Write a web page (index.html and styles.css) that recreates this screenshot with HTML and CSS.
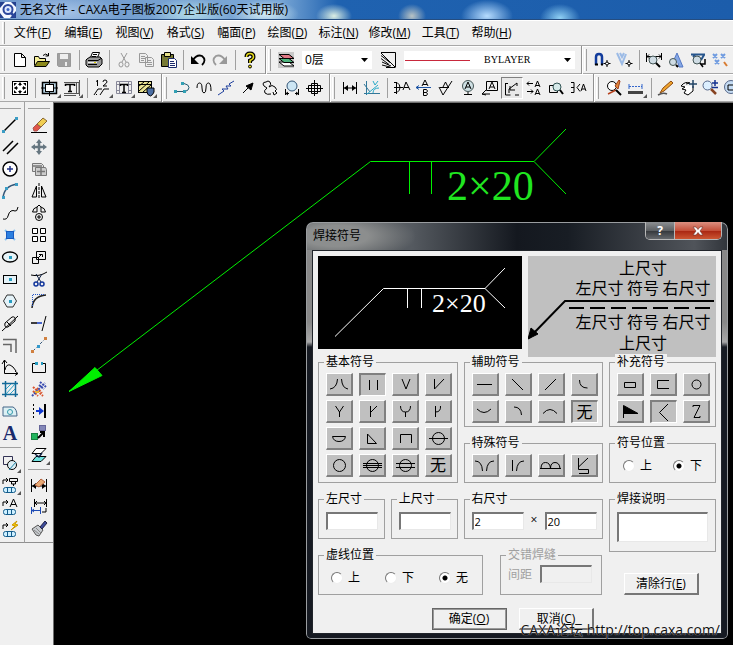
FILE: index.html
```html
<!DOCTYPE html>
<html lang="zh-CN">
<head>
<meta charset="utf-8">
<title>无名文件 - CAXA电子图板2007企业版(60天试用版)</title>
<link rel="stylesheet" href="styles.css">
</head>
<body>
<div class="app">
<header class="titlebar">
<svg class="logo" viewBox="0 0 16 16"><rect width="16" height="16" fill="#f4f8ff"/><path d="M0 0h5L0 6zM10 16l6-7v7zM0 11l4 5H0zM11 0h5v5z" fill="#24418f"/><circle cx="8" cy="7.500" r="4.500" fill="#dfeaff" stroke="#2c479c" stroke-width="2"/><circle cx="8" cy="7.500" r="1.500" fill="#3a62c4"/><path d="M11 11l4 4" stroke="#2c479c" stroke-width="2.500"/></svg>
<h1>无名文件 - CAXA电子图板2007企业版(60天试用版)</h1>
</header>
<nav class="menubar"><span class="grip"></span>
<button>文件(<u>F</u>)</button><button>编辑(<u>E</u>)</button><button>视图(<u>V</u>)</button><button>格式(<u>S</u>)</button><button>幅面(<u>P</u>)</button><button>绘图(<u>D</u>)</button><button>标注(<u>N</u>)</button><button>修改(<u>M</u>)</button><button>工具(<u>T</u>)</button><button>帮助(<u>H</u>)</button>
</nav>

<div class="toolbar"><span class="grip"></span>
<button class="tool"><svg viewBox="0 0 18 18"><path d="M3.500 2.500h7l4 4v9h-11zM10.500 2.500v4h4" fill="#fff"/></svg></button>
<button class="tool"><svg viewBox="0 0 18 18"><path d="M1.500 14.500v-9h4l1 2h6v3" fill="#f6f09a"/><path d="M1.500 15.500l3-5h12l-3.500 5z" fill="#8c8a1c"/><path d="M10 4.500q3-3 5 0M15.500 2v3h-3"/></svg></button>
<button class="tool"><svg viewBox="0 0 18 18" stroke="#999"><path d="M2.500 2.500h13v13h-12l-1-1z" fill="#a0a0a0"/><path d="M5 3h8v5H5zM10 11h2v4h-2z" fill="#eee" stroke="none"/></svg></button>
<span class="sep"></span>
<button class="tool"><svg viewBox="0 0 18 18"><path d="M5.500 6.500l2-5h7l-2 5" fill="#fff"/><path d="M2 8l3-2h10l2 2v5l-3 3H3l-2-2V9z" fill="#999"/><path d="M8 3.500h4M7 5.500h4M3 9.500h10l3-2M3 13.500h9" /><path d="M3 11.500h9" stroke="#eee"/><path d="M9 11.500h2" stroke="#e2d200"/></svg></button>
<span class="sep"></span>
<button class="tool"><svg viewBox="0 0 18 18" stroke="#999"><path d="M6 2l5 9M12 2L7 11"/><ellipse cx="6" cy="13.500" rx="2" ry="2.500"/><ellipse cx="12" cy="13.500" rx="2" ry="2.500"/></svg></button>
<button class="tool"><svg viewBox="0 0 18 18" stroke="#999"><path d="M2.500 2.500h6l2 2v7h-8zM8.500 6.500h6l2 2v7h-8zM4 5.500h4M4 7.500h4M4 9.500h3M10 9.500h4M10 11.500h5M10 13.500h5" fill="#eee"/></svg></button>
<button class="tool"><svg viewBox="0 0 18 18"><path d="M2.500 3.500h12v12h-12z" fill="#777a35"/><path d="M5.500 1.500h6v4h-6z" fill="#e7e18a"/><path d="M9.500 7.500h6l2 2v7h-8z" fill="#fff" stroke="#1b2a6c"/><path d="M11 10.500h4M11 12.500h5M11 14.500h5" stroke="#1b2a6c"/></svg></button>
<span class="sep"></span>
<button class="tool"><svg viewBox="0 0 18 18"><path d="M4 9q4-6 9-4 5 4 0 9" stroke-width="1.800"/><path d="M2 5v8h8z" fill="#000" stroke="none"/></svg></button>
<button class="tool"><svg viewBox="0 0 18 18" stroke="#999"><path d="M14 9q-4-6-9-4-5 4 0 9" stroke-width="1.800"/><path d="M16 5v8H8z" fill="#999" stroke="none"/></svg></button>
<span class="sep"></span>
<button class="tool"><svg viewBox="0 0 18 18"><path d="M5.500 6q0-3.500 3.500-3.500T12.500 6Q12.500 8 9 9.500V12" stroke-width="4"/><path d="M5.500 6q0-3.500 3.500-3.500T12.500 6Q12.500 8 9 9.500V12" stroke="#e8dc18" stroke-width="1.500"/><circle cx="9" cy="15.500" r="1.500" fill="#e8dc18"/></svg></button>
<span class="edge"></span><span class="grip"></span>
<button class="tool"><svg viewBox="0 0 18 18"><rect x="1" y="1" width="16" height="16" fill="#c8c8c8" stroke="none"/><path d="M2 11l5 4h10l-5-4z" fill="#fff"/><path d="M2 7.500l5 4h10l-5-4z" fill="#4fb57e"/><path d="M2 3.500l5 4h10l-5-4z" fill="#df7884"/></svg></button>
<label class="combo layer"><select aria-label="图层"><option>0层</option></select><svg viewBox="0 0 7 4"><path d="M0 0h7L3.500 4z"/></svg></label>
<button class="tool"><svg viewBox="0 0 18 18"><path d="M2 1.500h14.500V16M2 2l14 14M2 4.500l9 7M2 7.500l8 6M3 11l9 4M3 14l8 2M7 16.500h9.500" fill="none"/></svg></button>
<label class="combo line"><select aria-label="线型"><option>BYLAYER</option></select><svg viewBox="0 0 7 4"><path d="M0 0h7L3.500 4z"/></svg></label>
<span class="edge"></span><span class="grip"></span>
<button class="tool"><svg viewBox="0 0 18 18"><path d="M3 14V6q0-3 3-3t3 3v8" stroke="#123c9c" stroke-width="2.500"/><path d="M2 13.500h3M8 13.500h2" stroke-width="2"/><path d="M14 9v7M10.500 12.500h7"/><circle cx="14" cy="12.500" r="1.500" fill="#fff"/></svg></button>
<button class="tool"><svg viewBox="0 0 18 18"><path d="M2 2l5 11 4-10M5 2l2 4 2-4" stroke="#9cbbe6" stroke-width="2"/><path d="M14 9v7M10.500 12.500h7"/><circle cx="14" cy="12.500" r="1.500" fill="#fff"/></svg></button>
<span class="sep"></span>
<button class="tool"><svg viewBox="0 0 18 18"><path d="M1.500 2v9M16.500 2v7M2 5.500h14M4 3.500l-2 2 2 2M14 3.500l2 2-2 2"/><circle cx="8" cy="9" r="4" fill="#cfdce4" stroke="#455"/><path d="M11 12l4 4" stroke-width="2"/></svg></button>
<button class="tool"><svg viewBox="0 0 18 18"><path d="M5 13l5-11 6 14h-4l-1-4" fill="#85a8e6" stroke="#5679c4"/><circle cx="6" cy="11" r="3.500" fill="#cfdce4" stroke="#455"/><path d="M9 14l2 2" stroke-width="2"/></svg></button>
<button class="tool"><svg viewBox="0 0 18 18"><path d="M2 3.500h14M4 6l2-2M15 4l-3 5" stroke="#26558c" stroke-width="2"/><circle cx="8" cy="9" r="4" fill="#cfdce4" stroke="#455"/><path d="M11 12l3 4M16 8v5h-4" stroke-width="1.500"/></svg></button>
<button class="tool"><svg viewBox="0 0 18 18" stroke="#6f9be0"><path d="M2 3l4 4M6 3L2 7M10 3l4 4M14 3l-4 4M4 9l4 4M8 9l-4 4" stroke-width="2"/><path d="M13 11l3 4" stroke="#d87c32" stroke-width="2"/></svg></button>
</div>

<div class="toolbar"><span class="grip"></span>
<button class="tool"><svg viewBox="0 0 18 18"><rect x="1.500" y="2.500" width="15" height="13" fill="#fff"/><path d="M9 4v3M9 11v3M3.500 9H7M11 9h3.500"/><path d="M9 3l2 3H7zM9 15l2-3H7zM3 9l3-2v4zM15 9l-3-2v4zM3 4h3L3 7zM15 4h-3l3 3zM3 14h3l-3-3zM15 14h-3l3-3z" fill="#000" stroke="none"/></svg></button>
<span class="sep"></span>
<button class="tool drop"><svg viewBox="0 0 18 18"><rect x="1.500" y="3.500" width="14" height="11" fill="#b8d4e4" stroke-width="1.500"/><rect x="4.500" y="5.500" width="8" height="7" fill="#fff"/><path d="M8.500 1v5M8.500 12v5M0 9h5M12 9h5"/></svg></button>
<button class="tool drop"><svg viewBox="0 0 18 18"><path d="M1 3.500h15v11H1M16.500 1v16M13.500 3v12M1 16.500h12" stroke="#555"/><path d="M2.500 7V5.500h9V7M7 5.500v7M5 12.500h4" stroke-width="1.500"/></svg></button>
<span class="sep"></span>
<button class="tool drop"><svg viewBox="0 0 18 18"><path d="M4.500 1v6M3 2.500l1.500-1M10 3q0-2 2-2t2 2q0 1-4 4h4M1 16l4-6h4M7 16l4-6h5M3 16l1-1"/></svg></button>
<button class="tool drop"><svg viewBox="0 0 18 18"><path d="M1.500 2.500h15v12h-15zM1.500 5.500h15M1.500 11.500h15M4.500 2.500v12M13.500 2.500v12" stroke="#889"/><path d="M5 4h8v10H5z" fill="#eee" stroke="none"/><path d="M5.500 7V5.500h7V7M9 5.500v8M7 13.500h4" stroke-width="1.500"/></svg></button>
<button class="tool drop"><svg viewBox="0 0 18 18"><rect x="1.500" y="2.500" width="13" height="11" fill="#e9e394"/><path d="M2 7l5-4M2 12l10-9M6 13l8-7M1 5.500h13"/><path d="M10 9h7v4q-1 3-3.500 4Q10 16 10 13z" fill="#4b6ea3"/></svg></button>
<span class="edge"></span><span class="grip"></span>
<button class="tool"><svg viewBox="0 0 18 18"><path d="M2 12.500h10q4-1 4-4t-5-4" stroke="#245b73"/><path d="M1 11h3v3H1zM10 11h3v3h-3zM8 3h3v3H8z" fill="#32a0b4" stroke="none"/></svg></button>
<button class="tool"><svg viewBox="0 0 18 18"><path d="M2 9q0-5 2.500-5T7 9t2 5 2-5 2.500-5T16 12"/></svg></button>
<button class="tool"><svg viewBox="0 0 18 18"><path d="M1 16l6-4-2-2h6L9 7h5l-2-2 5-3" stroke="#1d3e9c"/></svg></button>
<button class="tool"><svg viewBox="0 0 18 18"><path d="M4 14L9 9"/><path d="M14 4l-2 7-5-4z" fill="#000"/></svg></button>
<button class="tool"><svg viewBox="0 0 18 18"><path d="M6 9q-4-2-4-4t3-2q2-2 4 0t-1 5M6 9q-4 3-2 5t6 1M8 8q3-3 6 0t0 4l2 2-3 2-1-3"/></svg></button>
<button class="tool"><svg viewBox="0 0 18 18"><circle cx="9" cy="7" r="5" fill="#cde6f4" stroke="#357"/><path d="M2.500 10v6M15.500 10v6M2 14.500h4M12 14.500h4M5 13l-2 1.500L5 16M13 13l2 1.500-2 1.500"/></svg></button>
<button class="tool"><svg viewBox="0 0 18 18"><path d="M9.500 1v16M1 9.500h17M6.500 4.500h6v10h-6zM3.500 6.500h12v6h-12z"/></svg></button>
<span class="edge"></span><span class="grip"></span>
<button class="tool"><svg viewBox="0 0 18 18"><path d="M2.500 3v12M15.500 3v12M3 9h12"/><path d="M3 9l4-3v6zM15 9l-4-3v6z" fill="#000" stroke="none"/></svg></button>
<button class="tool"><svg viewBox="0 0 18 18"><path d="M3.500 2v14M1 14.500h16M1 5l6 8" stroke="#379"/><path d="M4 15L15 6M10 2l2 4 3-4M10 14q0-5 6-5" stroke="#2aaac8"/></svg></button>
<span class="sep"></span>
<button class="tool"><svg viewBox="0 0 18 18"><path d="M1 3.500h3q3 2 3 5t-3 5H1M3.500 3v12M1 8.500h9M10 11l3-8 4 8M11 8.500h5"/></svg></button>
<button class="tool"><svg viewBox="0 0 18 18"><path d="M7 7l3-6 3 6M8 5.500h4M8.500 10.500v6h3q2-1.500 0-3 2-1.500 0-3z M8.500 13.500h3"/><path d="M1 8.500h15M4 6.500l-3 2 3 2" stroke="#1b53a4"/></svg></button>
<button class="tool"><svg viewBox="0 0 18 18"><path d="M2 8l4 8 9-14M6 8l2.500-5L11 8M3 8.500h9"/></svg></button>
<button class="tool"><svg viewBox="0 0 18 18"><circle cx="9" cy="7" r="5.500" fill="#cfe0e4" stroke="#455"/><path d="M6 10l3-7 3 7M7 8h4M9 13v3M5 15.500h8"/></svg></button>
<button class="tool"><svg viewBox="0 0 18 18"><path d="M5.500 2.500h11v9h-11zM8 10l3-7 3 7M9 8h4M5 11l-4 4h8M4 12l-3 3 4 1"/></svg></button>
<button class="tool on"><svg viewBox="0 0 18 18"><path d="M2.500 4v12h5M2 4.500h3M6 14v-4l8-6M7 7v4h5M14 4v3M12 16h4"/></svg></button>
<button class="tool"><svg viewBox="0 0 18 18"><path d="M10 8l2.500-6L15 8M11 6.500h3M10 16l2.500-6 2.500 6M11 14.500h3M2 4.500h6M4 2.500l-2 2 2 2M2 12.500h6M6 10.500l2 2-2 2"/></svg></button>
<button class="tool"><svg viewBox="0 0 18 18"><path d="M2.500 6.500h8v7h-8z" fill="#eee"/><circle cx="10" cy="8" r="4" fill="#d6e9e9" stroke="#355"/><path d="M13 11l3 4" stroke-width="2"/></svg></button>
<button class="tool"><svg viewBox="0 0 18 18"><path d="M2 3.500h3v10H2M2 8.500h3M11 5l-3 3.500 3 4M12 12l2.500-7 2.500 7M13 10h3"/></svg></button>
<span class="edge"></span><span class="grip"></span>
<button class="tool"><svg viewBox="0 0 18 18"><circle cx="7" cy="7" r="4.500" fill="#fff"/><path d="M11 11L3 15" stroke="#b8421e" stroke-width="1.500"/><path d="M14 1l-4 6 3 3 2-8z" fill="#e0893c" stroke="#a03c18"/><path d="M11 11l5 5" stroke-width="2"/></svg></button>
<button class="tool drop"><svg viewBox="0 0 18 18"><path d="M2 5v5M15 5v5" stroke="#36c"/><path d="M2 7.500h13" stroke="#36c" stroke-dasharray="2 1"/><path d="M1 12h15v3H1z" fill="#444" stroke="none"/></svg></button>
<span class="sep"></span>
<button class="tool"><svg viewBox="0 0 18 18"><path d="M3 14l3-5 8-7 2 2-9 8z" fill="#f0a52d" stroke="#8d4b14"/><path d="M1 16q5-3 9-1" stroke="#555" stroke-width="1.500"/></svg></button>
<button class="tool"><svg viewBox="0 0 18 18"><path d="M2 7q4-5 9-3l-4 1M2 7l4 1-3 2 4 1-2 3 4 2 5-4V7" fill="#fff"/><path d="M14 1v8M10 5h8" stroke="#246" stroke-width="1.500"/></svg></button>
<button class="tool"><svg viewBox="0 0 18 18"><circle cx="6.500" cy="6.500" r="4.500" fill="#dcefff" stroke="#568"/><path d="M10 10l5 5" stroke="#842" stroke-width="2.500"/><path d="M14 1v6M11 4h6M11 8.500h6" stroke="#13318f" stroke-width="1.500"/></svg></button>
<button class="tool"><svg viewBox="0 0 18 18"><circle cx="8" cy="8" r="6.500" fill="#c5dcf4" stroke="#568"/><path d="M5 6h6v5H5z"/></svg></button>
</div>

<div class="workspace">
<aside class="palettes">
<div class="palette first"><span class="hgrip"></span>
<button class="tool"><svg viewBox="0 0 18 18"><path d="M3 15L15 3" stroke-width="1.500"/><path d="M1 14h3v3H1zM14 1h3v3h-3z" fill="#3b9cc4" stroke="none"/></svg></button>
<button class="tool"><svg viewBox="0 0 18 18"><path d="M2 13L12 3M6 16L17 5" stroke-width="1.500"/></svg></button>
<button class="tool"><svg viewBox="0 0 18 18"><circle cx="9" cy="9" r="7" fill="#fff" stroke-width="1.500"/><path d="M9 6v6M6 9h6" stroke="#238" stroke-width="1.500"/></svg></button>
<button class="tool"><svg viewBox="0 0 18 18"><path d="M2 16Q3 4 16 2" stroke="#357" stroke-width="1.500"/><path d="M1 14h3v3H1zM4 5h3v3H4zM14 1h3v3h-3z" fill="#3b9cc4" stroke="none"/></svg></button>
<button class="tool"><svg viewBox="0 0 18 18"><path d="M2 15q4 1 5-3t3-5 4 0 3-4"/></svg></button>
<button class="tool"><svg viewBox="0 0 18 18"><path d="M4 4l10 10M14 4L4 14" stroke="#8cc4f0" stroke-width="2"/><rect x="5.500" y="5.500" width="7" height="7" fill="#2b7fe0" stroke="#185ac0"/></svg></button>
<button class="tool"><svg viewBox="0 0 18 18"><ellipse cx="9" cy="9" rx="7.500" ry="5" fill="#e8f4f8" stroke-width="1.300"/><path d="M8 8h3v3H8z" fill="#289cc0" stroke="none"/></svg></button>
<button class="tool"><svg viewBox="0 0 18 18"><rect x="2.500" y="5.500" width="13" height="8" fill="#e4f2f8"/><path d="M8 8h3v3H8z" fill="#289cc0" stroke="none"/></svg></button>
<button class="tool"><svg viewBox="0 0 18 18"><path d="M6 3h6l3.500 6-3.500 6H6L2.500 9z" fill="#e4f2f8" stroke="#333"/><path d="M8 8h3v3H8z" fill="#289cc0" stroke="none"/></svg></button>
<button class="tool"><svg viewBox="0 0 18 18"><path d="M4 9l7-6q4-1 3 4l-7 6q-4 1-3-4zM1 17L17 2M6 8l4 4"/></svg></button>
<button class="tool"><svg viewBox="0 0 18 18"><path d="M2 3.500h13V17M2 8.500h8V16" stroke="#666" stroke-width="1.500"/></svg></button>
<button class="tool"><svg viewBox="0 0 18 18"><path d="M3.500 2v13.500H17M1 6l2.500-4L6 5M14 13l3 2.500-3 2M4 12q1-6 5-5 3 1 6 6" /></svg></button>
<button class="tool"><svg viewBox="0 0 18 18"><path d="M4.500 1v16M14.500 1v16M1 3.500h16M1 14.500h16" stroke="#146a98" stroke-width="1.500"/><path d="M5 9l5-5M5 14L14 4M9 14l5-5" stroke="#30a0c4"/></svg></button>
<button class="tool"><svg viewBox="0 0 18 18"><path d="M2 14V5h10q4 2 4 9z" fill="#dcf0f4" stroke="#468"/><circle cx="9" cy="10" r="2.500" stroke="#39a"/></svg></button>
<button class="tool letter">A</button>
<span class="hsep"></span>
<button class="tool drop"><svg viewBox="0 0 18 18"><path d="M2.500 2.500h9v8h-9z" stroke="#335"/><circle cx="11" cy="11" r="4.500" fill="#dceef4"/><path d="M8 16l7-8" stroke="#28a"/></svg></button>
<button class="tool drop"><svg viewBox="0 0 18 18"><path d="M2 8V4h5M5 2l2 2-2 2M8.500 2.500h8v3h-8zM10.500 5v3h4V5M12.500 8v2"/><rect x="2.500" y="11.500" width="12" height="5" rx="2" fill="#cdefff" stroke="#135c8c"/><path d="M6.500 11v5M10.500 11v5" stroke="#135c8c"/></svg></button>
<button class="tool"><svg viewBox="0 0 18 18"><path d="M2 8V4h5M5 2l2 2-2 2M9 9l3.500-8L16 9M10 6.500h5"/><rect x="2.500" y="11.500" width="12" height="5" rx="2" fill="#cdefff" stroke="#135c8c"/><path d="M6.500 11v5M10.500 11v5" stroke="#135c8c"/></svg></button>
<button class="tool"><svg viewBox="0 0 18 18"><path d="M2 9V5h5M5 3l2 2-2 2"/><path d="M16 1l-5 4 3 1-4 4 7-5-3-1z" fill="#f7c600" stroke="#cc9a00"/><rect x="2.500" y="11.500" width="12" height="5" rx="2" fill="#cdefff" stroke="#135c8c"/><path d="M6.500 11v5M10.500 11v5" stroke="#135c8c"/></svg></button>
</div>
<div class="palette"><span class="hgrip"></span>
<button class="tool"><svg viewBox="0 0 18 18"><path d="M1 16.500h16"/><path d="M3 12l4-4 4 3-4 4H4z" fill="#e0574a" stroke="#a55"/><path d="M7 8l6-6 4 3-6 6z" fill="#f0cd52" stroke="#863"/></svg></button>
<button class="tool"><svg viewBox="0 0 18 18"><path d="M9 4v10M4 9h10" stroke="#667680" stroke-width="2.500"/><path d="M9 1l3 4H6zM9 17l3-4H6zM1 9l4-3v6zM17 9l-4-3v6z" fill="#667680" stroke="none"/></svg></button>
<button class="tool"><svg viewBox="0 0 18 18" stroke="#777"><path d="M2.500 3.500h9l2 2v6h-11z" fill="#ddd"/><path d="M5.500 7.500h10l1 2v6h-11z" fill="#ccc"/><path d="M11 8v7M7 11.500h8M3 6h9" stroke-width="1.500"/></svg></button>
<button class="tool"><svg viewBox="0 0 18 18"><path d="M9 1v16" stroke-dasharray="3 1"/><path d="M6.500 4v11H2zM11.500 4v11H16z" fill="#eee"/></svg></button>
<button class="tool"><svg viewBox="0 0 18 18"><circle cx="9" cy="13" r="3.500"/><path d="M9 11v4M7 13h4M7 8H2.500Q3 4 7 3zM7 3l2-2M11 8V3q4 1 4.500 5zM11 3L9 1"/></svg></button>
<button class="tool"><svg viewBox="0 0 18 18"><path d="M2.500 2.500h5v5h-5zM10.500 2.500h5v5h-5zM2.500 10.500h5v5h-5zM10.500 10.500h5v5h-5z" fill="#fff"/></svg></button>
<button class="tool"><svg viewBox="0 0 18 18"><path d="M6.500 3.500h9v8h-9zM2.500 9.500h6v6h-6zM8 10l4-4M12.500 9V6.500H9"/></svg></button>
<button class="tool"><svg viewBox="0 0 18 18"><path d="M1 5q8 2 16-3"/><path d="M6 4l5 8M12 4l-5 8" stroke="#124"/><circle cx="6" cy="14" r="2" stroke="#12369c" stroke-width="1.500"/><circle cx="12" cy="14" r="2" stroke="#12369c" stroke-width="1.500"/></svg></button>
<button class="tool"><svg viewBox="0 0 18 18"><path d="M2 16Q3 4 16 3" stroke="#222" stroke-width="1.500"/><path d="M2.500 14V2.500H14" stroke="#2657c8" stroke-dasharray="1 1"/></svg></button>
<button class="tool"><svg viewBox="0 0 18 18"><path d="M16 2l-4 15"/><path d="M1 9h6" stroke-width="1.500"/><path d="M7 9h5" stroke="#1038c0" stroke-width="1.500"/></svg></button>
<button class="tool"><svg viewBox="0 0 18 18"><path d="M3 15L15 3" stroke-dasharray="3 2" stroke="#357"/><path d="M1 14h3v3H1zM14 1h3v3h-3z" fill="#d08040" stroke="none"/><path d="M7 9h3v3H7z" fill="#39c" stroke="none"/></svg></button>
<button class="tool"><svg viewBox="0 0 18 18"><path d="M6 5.500H2.500v9h13v-9H12"/><path d="M5 4h3v3H5zM11 4h2v3h-2z" fill="#259bc0" stroke="none"/></svg></button>
<button class="tool"><svg viewBox="0 0 18 18"><path d="M3 7l10 9M3 11l5 5M7 8l5 5" stroke="#d9532d" stroke-width="2" stroke-dasharray="2 1"/><path d="M2 16L15 3M10 2l6 5M9 5l5 4" stroke="#3b4db0" stroke-width="2" stroke-dasharray="2 1"/><path d="M5 12h4" stroke="#e7b332" stroke-width="2"/></svg></button>
<button class="tool"><svg viewBox="0 0 18 18"><path d="M3.500 2v14" stroke-dasharray="2 2"/><path d="M15 2v14" stroke-width="2"/><path d="M6 9h4" stroke="#1038d0" stroke-width="2"/><path d="M9 5l5 4-5 4z" fill="#1038d0" stroke="none"/></svg></button>
<button class="tool"><svg viewBox="0 0 18 18"><rect x="1.500" y="9.500" width="6" height="6" fill="#22b45c" stroke="#178040"/><rect x="9.500" y="1.500" width="6" height="5" fill="#8387b8" stroke="#669"/><path d="M8 14l6-6M10 8h4v5" stroke-width="2"/></svg></button>
<button class="tool drop"><svg viewBox="0 0 18 18"><path d="M6 2.500h10l-5 5H2z" fill="#fff"/><path d="M6 10.500h10l-5 5H2z" fill="#6fe4e0"/><path d="M5 8l4 3 3-4" stroke="#124" stroke-width="1.500"/></svg></button>
<span class="hsep"></span>
<button class="tool"><svg viewBox="0 0 18 18"><path d="M1.500 3v13M16.500 3v13M2 10h14"/><path d="M2 10l4-3v6zM16 10l-4-3v6z" fill="#000" stroke="none"/><path d="M5 9l6-6 4 3-6 5z" fill="#e7aa76" stroke="#b4623c"/></svg></button>
<button class="tool"><svg viewBox="0 0 18 18"><path d="M4.500 1v8M16.500 1v8M5 5h11M7 3L5 5l2 2M14 3l2 2-2 2M16 10v4h-4"/><path d="M1.500 9v7M10.500 9v7M2 12.500h8M4 11l-2 1.500L4 14" stroke="#1d4ab4"/></svg></button>
<button class="tool"><svg viewBox="0 0 18 18"><path d="M2 9l6-4 5 5-4 6-3-1z" fill="#c8ccd0" stroke="#555"/><path d="M10 7l5-6 2 2-5 6z" fill="#3d4c9c" stroke="#224"/><path d="M4 10l5 4M6 8l5 5" stroke="#888"/></svg></button>
</div>
</aside>

<main class="canvas">
<svg class="drawing" viewBox="53 102 680 543" width="680" height="543"><path d="M69 391.500L370.500 161.500H534L566 129M534 161.500L566 194M409.500 162v32M431.500 162v32"/><path d="M69 391.500l26-24 7 8z" fill="#00f000"/><text x="447" y="200">2×20</text></svg>

<section class="dialog" role="dialog" aria-labelledby="dlg">
<header><h2 id="dlg">焊接符号</h2><div class="winbtns"><button class="help" aria-label="帮助">?</button><button class="close" aria-label="关闭"><svg viewBox="0 0 12 10"><path d="M1 1h3l2 2.500L8 1h3L8 5l3 4H8L6 6.500 4 9H1l3-4z" fill="#fff" stroke="#6b3028" stroke-width=".6"/></svg></button></div></header>
<form class="client" onsubmit="return false">
<div class="previews">
<svg class="preview" viewBox="0 0 204 93"><path d="M17 80.500L65.500 32.500H167L187 12M167 32.500L187 52M89.500 33v19M103.500 33v19"/><text x="114" y="56">2×20</text></svg>
<svg class="legend-pic" viewBox="0 0 188 101"><path d="M1 82L37 45H186" stroke-width="2"/><path d="M41 52H183" stroke-width="2" stroke-dasharray="15 6"/><path d="M0 83l3-11 7 6z" fill="#000"/><text x="115" y="18">上尺寸</text><text x="115" y="38">左尺寸 符号 右尺寸</text><text x="115" y="72">左尺寸 符号 右尺寸</text><text x="115" y="93">上尺寸</text></svg>
</div>
<div class="groups">
<div class="left">
<div class="pair">
<div class="stack basic">
<fieldset><legend>基本符号</legend><div class="keys">
<button><svg viewBox="0 0 21 17"><path d="M8.500 3Q8 12 1 13M12.500 3Q13 12 19 13"/></svg></button>
<button class="on"><svg viewBox="0 0 21 17"><path d="M6.500 3v10M14.500 3v10"/></svg></button>
<button><svg viewBox="0 0 21 17"><path d="M7 3l4 10 4-10"/></svg></button>
<button><svg viewBox="0 0 21 17"><path d="M6.500 3v10L16 3"/></svg></button>
<button><svg viewBox="0 0 21 17"><path d="M6.500 3l4 6 4-6M10.500 9v5"/></svg></button>
<button><svg viewBox="0 0 21 17"><path d="M8.500 3v11M8.500 9.500L15 3"/></svg></button>
<button><svg viewBox="0 0 21 17"><path d="M5.500 3q0 6 5 6t5-6M10.500 9v5"/></svg></button>
<button><svg viewBox="0 0 21 17"><path d="M7.500 3v11M7.500 9q5.500 0 5-6"/></svg></button>
<button><svg viewBox="0 0 21 17"><path d="M3.500 6.500h13q-1 5-6.500 5t-6.500-5z"/></svg></button>
<button><svg viewBox="0 0 21 17"><path d="M5.500 4v9.500h9z"/></svg></button>
<button><svg viewBox="0 0 21 17"><path d="M5.500 13V4.500h11V13"/></svg></button>
<button><svg viewBox="0 0 21 17"><circle cx="10.500" cy="8.500" r="6"/><path d="M1 8.500h19"/></svg></button>
<button><svg viewBox="0 0 21 17"><circle cx="10.500" cy="8.500" r="6"/></svg></button>
<button><svg viewBox="0 0 21 17"><circle cx="10.500" cy="8.500" r="6"/><path d="M1 6.500h19M1 8.500h19M1 10.500h19"/></svg></button>
<button><svg viewBox="0 0 21 17"><circle cx="10.500" cy="8.500" r="6"/><path d="M1 6.500h19M1 10.500h19"/></svg></button>
<button>无</button>
</div></fieldset>
<div class="pair">
<fieldset class="size"><legend>左尺寸</legend><input type="text" aria-label="左尺寸"></fieldset>
<fieldset class="size"><legend>上尺寸</legend><input type="text" aria-label="上尺寸"></fieldset>
</div>
</div>
<div class="stack aux">
<fieldset class="two-rows"><legend>辅助符号</legend><div class="keys">
<button><svg viewBox="0 0 21 17"><path d="M3 8.500h15"/></svg></button>
<button><svg viewBox="0 0 21 17"><path d="M5 3l11 11"/></svg></button>
<button><svg viewBox="0 0 21 17"><path d="M16 3L5 14"/></svg></button>
<button><svg viewBox="0 0 21 17"><path d="M6.500 4q0 8 8 8"/></svg></button>
<button><svg viewBox="0 0 21 17"><path d="M3 6q7 7 14 0"/></svg></button>
<button><svg viewBox="0 0 21 17"><path d="M7 4q7 0 7.500 8"/></svg></button>
<button><svg viewBox="0 0 21 17"><path d="M3 10.500q7-8 14 0"/></svg></button>
<button class="on">无</button>
</div></fieldset>
<fieldset><legend>特殊符号</legend><div class="keys">
<button><svg viewBox="0 0 21 17"><path d="M1 4q7 0 7.500 10M20 4q-7 0-7.500 10"/></svg></button>
<button><svg viewBox="0 0 21 17"><path d="M5.500 3v11M17 4q-7 0-7.500 10"/></svg></button>
<button><svg viewBox="0 0 21 17"><path d="M0 11.500h21M1 11.500q0-6 4.500-6t5 6q0-6 4.500-6t5 6"/></svg></button>
<button><svg viewBox="0 0 21 17"><path d="M5.500 1v11.500h10v4H6M15 1l-9.500 9"/></svg></button>
</div></fieldset>
<fieldset class="size"><legend>右尺寸</legend><div class="times"><input type="text" value="2" aria-label="右尺寸一"><span>×</span><input type="text" value="20" aria-label="右尺寸二"></div></fieldset>
</div>
</div>
<div class="lower">
<fieldset class="dash"><legend>虚线位置</legend><div class="radios wide"><label><input type="radio" name="dash">上</label><label><input type="radio" name="dash">下</label><label><input type="radio" name="dash" checked>无</label></div></fieldset>
<fieldset class="stagger" disabled><legend>交错焊缝</legend><label>间距<input type="text"></label></fieldset>
</div>
</div>
<div class="stack side">
<fieldset class="two-rows"><legend>补充符号</legend><div class="keys">
<button><svg viewBox="0 0 21 17"><path d="M4.500 6.500h11v5h-11z"/></svg></button>
<button><svg viewBox="0 0 21 17"><path d="M16 4.500H4.500v8H16"/></svg></button>
<button><svg viewBox="0 0 21 17"><circle cx="10.500" cy="8.500" r="4.500"/></svg></button>
<button><svg viewBox="0 0 21 17"><path d="M3.500 15V2.500L18 10.500H3.500" fill="#000"/></svg></button>
<button class="on"><svg viewBox="0 0 21 17"><path d="M14 0L5.500 8.500 14 17"/></svg></button>
<button><svg viewBox="0 0 21 17"><path d="M7 4V2.500h7L8 14.500h6V13"/></svg></button>
</div></fieldset>
<fieldset class="pos"><legend>符号位置</legend><div class="radios"><label><input type="radio" name="pos">上</label><label><input type="radio" name="pos" checked>下</label></div></fieldset>
<fieldset class="size"><legend>焊接说明</legend><textarea aria-label="焊接说明"></textarea></fieldset>
<button class="push clear">清除行(<u>E</u>)</button>
</div>
</div>
<div class="actions"><button class="push default">确定(<u>O</u>)</button><button class="push">取消(<u>C</u>)</button></div>
</form>
</section>
<a class="watermark" href="http://top.caxa.com/">CAXA论坛 http://top.caxa.com/</a>
</main>
</div>
</div>
</body>
</html>
```
FILE: styles.css
```css
* { box-sizing: border-box; }
body { margin: 0; background: #f0f0f0; color: #000; font: 12px/16px "Open Sans", "Noto Sans CJK SC", sans-serif; }
button, input, select, textarea { font: inherit; color: inherit; margin: 0; padding: 0; border-radius: 0; }
button { background: none; border: 0; }
h1, h2 { margin: 0; font-size: 12px; font-weight: 400; }
.app { display: flex; flex-direction: column; min-height: 100vh; overflow: hidden; }

.titlebar {
  display: flex; align-items: center; gap: 4px; height: 20px; border-bottom: 1px solid #254d80; white-space: nowrap;
  background:
    radial-gradient(ellipse 18px 12px at 334px 16px, #dcefe4, transparent),
    radial-gradient(ellipse 14px 12px at 412px 16px, #b9c3c4, transparent),
    radial-gradient(ellipse 26px 16px at 487px 16px, #b6dcff, transparent),
    radial-gradient(ellipse 20px 14px at 560px 18px, #8fd0f4, transparent),
    radial-gradient(ellipse 34px 14px at 265px 14px, #d2ebf4, transparent),
    radial-gradient(ellipse 40px 16px at 190px 14px, #b2ddea, transparent),
    radial-gradient(ellipse 60px 18px at 60px 12px, #a9c6e8, transparent),
    linear-gradient(90deg, #6f98cc, #7ba8d6 38%, #1f62b0 46%, #1c5dab);
}
.logo { width: 16px; height: 16px; }
.menubar, .toolbar { display: flex; align-items: center; flex: none; white-space: nowrap; }
.menubar { height: 26px; border-top: 1px solid #fff; border-bottom: 1px solid #a8a8a8; }
.menubar .grip { margin-right: 5px; }
.menubar button { width: 51px; flex: none; text-align: center; }
.menubar { padding-right: 8px; }
.menubar .grip { margin-right: 2px; }
.toolbar { height: 28px; border-top: 1px solid #fff; border-bottom: 1px solid #a8a8a8; }
.grip { flex: none; width: 3px; height: 22px; margin: 0 4px 0 2px; border: solid #a0a0a0; border-width: 0 1px 0 0; box-shadow: inset 1px 0 #fff; }
.edge { flex: none; width: 5px; height: 28px; border-right: 1px solid #909090; box-shadow: 1px 0 #fff; }
.sep { flex: none; width: 8px; height: 20px; background: linear-gradient(#a0a0a0, #a0a0a0) 4px 0 / 1px 100% no-repeat; }
.tool { position: relative; display: grid; place-items: center; flex: none; width: 22px; height: 22px; }
.tool svg { width: 18px; height: 18px; fill: none; }
.tool svg:not([stroke]) { stroke: #000; }
.tool.on { background: #e8e8e8; border: 1px solid; border-color: #808080 #fff #fff #808080; }
.drop::after { content: ""; position: absolute; right: 0; bottom: 1px; border: solid transparent; border-width: 4px 0 0 4px; border-right: 0; border-bottom: 4px solid #555; border-top: 0; }
.letter { font: bold 20px/22px "Liberation Serif", serif; color: #1a2a6c; }
.combo { position: relative; display: flex; align-items: center; flex: none; height: 18px; }
.combo select { appearance: none; width: 100%; height: 18px; border: 0; background: #fff; }
.combo svg { position: absolute; right: 4px; width: 7px; height: 4px; pointer-events: none; }
.layer { width: 70px; margin: 0 5px; }
.layer select { padding-left: 3px; }
.line { width: 171px; margin: 0 2px 0 5px; }
.line select { padding-left: 80px; font: 10px/18px "Liberation Serif", serif; background: linear-gradient(#c8283c, #c8283c) 1px 9px / 65px 1px no-repeat #fff; }

.workspace { display: flex; flex: 1; }
.palettes { display: flex; align-items: flex-start; flex: none; width: 53px; overflow: hidden; }
.palette { display: flex; flex-direction: column; align-items: center; width: 28px; height: 441px; padding-bottom: 2px; border-bottom: 1px solid #909090; }
.palette.first { width: 25px; padding-right: 4px; border-right: 1px solid #a0a0a0; }
.palette:last-child { padding-right: 1px; }
.hgrip { flex: none; width: 22px; height: 3px; margin: 4px 0 5px; border-bottom: 1px solid #a0a0a0; }
.hsep { flex: none; width: 22px; height: 8px; background: linear-gradient(#a0a0a0, #a0a0a0) 0 3px / 100% 1px no-repeat; }
.canvas { position: relative; flex: 1; min-width: 0; border: solid #707070; border-width: 1px 0 0 1px; background: #000; }
.drawing { display: block; fill: none; stroke: #00f000; margin: -1px 0 0 -1px; }
.drawing text { font: 42px "Liberation Serif", serif; fill: #20e620; stroke: none; }

.dialog {
  position: absolute; right: 5px; top: 119px; width: 422px; padding: 0 6px 5px;
  border-radius: 7px 7px 5px 5px; box-shadow: inset 0 0 0 1px #9a9da0;
  background: radial-gradient(ellipse 80px 26px at 30px 14px, #8c8e8e 40%, transparent), linear-gradient(90deg, #55595c, #555a60 25%, #14181f 50%, #181d24 62%, #50545a 92%, #30343a) 0 0 / 100% 28px no-repeat, linear-gradient(#888 100px, #a8a8a8 120px, #161a22 125px);
}
.dialog header { display: flex; justify-content: space-between; height: 28px; padding-left: 1px; }
.dialog h2 { line-height: 27px; }
.winbtns { display: flex; height: 18px; border: 1px solid #b8b8b8; border-top: 0; border-radius: 0 0 5px 5px; overflow: hidden; }
.winbtns button { display: grid; place-items: center; }
.help { width: 28px; color: #fff; font-weight: 700; background: linear-gradient(#8c8f92, #5d6063 50%, #33363a 51%, #65686c); }
.close { width: 47px; border-left: 1px solid #b8b8b8; background: linear-gradient(#dc8f80, #c4503a 50%, #a82410 51%, #cc5632); }
.close svg { width: 12px; height: 10px; }
.client { padding: 5px 5px 3px; border: 1px solid #20242a; background: #f0f0f0; }
.previews { display: flex; justify-content: space-between; align-items: flex-start; }
.preview { width: 204px; height: 93px; background: #000; fill: none; stroke: #fff; }
.preview text { font: 26px "Liberation Serif", serif; fill: #fff; stroke: none; }
.legend-pic { width: 188px; height: 101px; background: #c0c0c0; fill: none; stroke: #000; }
.legend-pic text { font: 16px "Noto Sans CJK SC", sans-serif; fill: #000; stroke: none; text-anchor: middle; }
.groups { position: relative; display: flex; gap: 6px; margin-top: -3px; }
.left, .stack { display: flex; flex-direction: column; gap: 8px; min-width: 0; }
.left { flex: 1; }
.pair { display: flex; gap: 6px; }
.pair > * { flex: 1; }
.side { width: 107px; flex: none; }
fieldset { min-width: 0; margin: 0; padding: 3px 0 5px 7px; border: 1px solid #a0a0a0; }
.two-rows { padding-bottom: 3px; }
legend { height: 16px; margin-left: -2px; padding: 0 2px; background: #f0f0f0; line-height: 16px; white-space: nowrap; }
.keys { display: flex; flex-wrap: wrap; gap: 4px 6px; margin-right: -4px; }
.keys button { display: grid; place-items: center; width: 27px; height: 23px; background: #c0c0c0; border: solid; border-width: 1px 2px 2px 1px; border-color: #fff #808080 #808080 #fff; font-size: 16px; line-height: 18px; }
.side .keys { margin-right: -2px; }
.keys button.on { border-width: 2px 1px 1px 2px; border-color: #808080 #fff #fff #808080; }
.keys svg { width: 21px; height: 17px; fill: none; stroke: #000; }
input[type="text"], textarea { display: block; width: 52px; height: 18px; padding: 0 1px; background: #fff; border: solid; border-width: 2px 1px 1px 2px; border-color: #777 #e8e8e8 #e8e8e8 #777; font-size: 11px; line-height: 15px; }
.size { height: 48px; padding-top: 5px; }
.side .size { height: 61px; }
textarea { width: 91px; height: 30px; resize: none; }
.times { display: flex; }
.times span { width: 21px; text-align: center; }
.radios { display: flex; padding: 4px 0 0 6px; }
.radios.wide { padding-left: 5px; }
.radios label { display: flex; align-items: center; gap: 5px; width: 50px; flex: none; }
.radios.wide label { width: 54px; }
.pos, .dash, .stagger { height: 48px; }
.pos { overflow: hidden; }
input[type="radio"] { appearance: none; width: 12px; height: 12px; border: 1px solid; border-color: #777 #eee #eee #777; border-radius: 50%; background: #fff; }
input[type="radio"]:checked { background: radial-gradient(circle, #000 2px, #fff 3px); }
.lower { display: flex; justify-content: space-between; padding-right: 1px; }
.dash { width: 165px; }
.stagger { width: 102px; padding-top: 2px; color: #a0a0a0; }
.stagger label { display: flex; gap: 8px; line-height: 20px; }
.stagger input { background: #f0f0f0; }
.push { width: 75px; height: 22px; background: #f0f0f0; border: solid; border-width: 1px 2px 2px 1px; border-color: #fff #777 #777 #fff; line-height: 18px; white-space: nowrap; }
.push.default { border-color: #666; outline: 1px solid #999; outline-offset: -2px; }
.clear { margin: 13px 0 0 15px; }
.actions { display: flex; justify-content: center; gap: 12px; margin-top: 13px; padding-right: 8px; }
.watermark { position: absolute; right: 13px; bottom: 5px; color: #111; font-size: 14px; line-height: 20px; text-decoration: none; white-space: nowrap; text-shadow: 0 0 1px #fff; }
```
